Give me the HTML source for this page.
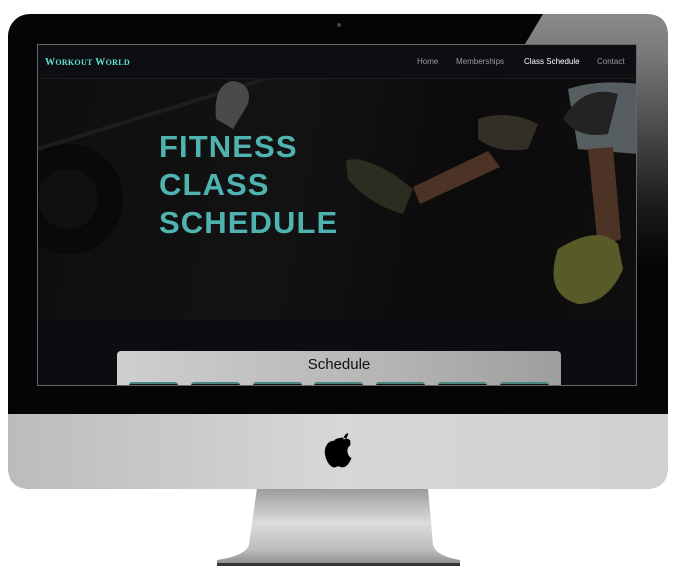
<!DOCTYPE html>
<html><head><style>
*{margin:0;padding:0;box-sizing:border-box}
body{width:698px;height:581px;background:#fff;position:relative;overflow:hidden;font-family:"Liberation Sans",sans-serif}
.abs{position:absolute}
</style></head><body>
<svg class="abs" style="left:0;top:0" width="698" height="581">
<defs>
<linearGradient id="st" x1="0" y1="0" x2="0" y2="1"><stop offset="0" stop-color="#9a9a9a"/><stop offset=".45" stop-color="#dcdcdc"/><stop offset=".8" stop-color="#bdbdbd"/><stop offset="1" stop-color="#8a8a8a"/></linearGradient>
<linearGradient id="chin" x1="0" y1="0" x2="1" y2="0"><stop offset="0" stop-color="#bcbcbc"/><stop offset=".5" stop-color="#d6d7d9"/><stop offset="1" stop-color="#cfd0d2"/></linearGradient>
<linearGradient id="gl" x1="0" y1="0" x2="0" y2="1"><stop offset="0" stop-color="#8a8a8a"/><stop offset=".1" stop-color="#7a7a7a"/><stop offset=".5" stop-color="#1a1a1a"/><stop offset=".65" stop-color="#050505"/></linearGradient>
</defs>
<path d="M257 488 L428 488 L433 545 Q436 556 460 560 L460 565 L217 565 L217 560 Q245 556 249 545 Z" fill="url(#st)"/>
<rect x="217" y="563" width="243" height="3" fill="#333"/>
<rect x="8" y="14" width="660" height="475" rx="22" fill="#050505"/>
<path d="M8 400 L668 400 L668 467 Q668 489 646 489 L30 489 Q8 489 8 467 Z" fill="url(#chin)"/>
<path d="M543 14 L646 14 Q668 14 668 36 L668 400 L525 400 L525 44 Z" fill="url(#gl)"/>
<rect x="8" y="386" width="660" height="28" fill="#050505"/>
<circle cx="339" cy="25" r="2" fill="#444"/>
<g transform="translate(340,450) scale(1.15) translate(-336,-452)">
<path d="M345 444 c-3 -4 -13 -3 -14 0 c-6 0 -9 6 -8 12 c1 6 5 12 9 11 c2 -1 3 -1 5 0 c4 1 7 -3 9 -8 c-4 -2 -5 -9 -1 -11 Z M339 443 c0 -3 2 -5 4 -6 c0 3 -1 5 -4 6 Z" fill="#000"/>
</g>
</svg>
<div class="abs" style="left:37px;top:44px;width:600px;height:342px;background:#0c0d10;border:1px solid #666;overflow:hidden">
 <div class="abs" style="left:0;top:0;width:600px;height:34px;background:#0d0e12;border-bottom:1px solid #1c1c1c">
  <div class="abs" style="left:7px;top:12px;color:#5fe3d3;font-weight:bold;font-size:10px;font-family:'Liberation Serif',serif;letter-spacing:.3px">W<span style="font-size:8px">ORKOUT</span> W<span style="font-size:8px">ORLD</span></div>
  <div class="abs" style="left:379px;top:12px;color:#9a9a9a;font-size:8px">Home</div>
  <div class="abs" style="left:418px;top:12px;color:#9a9a9a;font-size:8px">Memberships</div>
  <div class="abs" style="left:486px;top:12px;color:#fff;font-size:8px">Class Schedule</div>
  <div class="abs" style="left:559px;top:12px;color:#9a9a9a;font-size:8px">Contact</div>
 </div>
 <div class="abs" style="left:0;top:34px;width:600px;height:241px;background:linear-gradient(100deg,#151515,#1b1b1b 40%,#111 70%,#161616);overflow:hidden">
  <svg width="600" height="241" class="abs" style="left:0;top:0">
   <path d="M0 70 L260 -10" stroke="#2a2a2a" stroke-width="4"/>
   <circle cx="30" cy="120" r="55" fill="#0d0d0d"/><circle cx="30" cy="120" r="30" fill="#181818"/>
   <path d="M178 40 Q175 5 195 2 Q215 5 210 25 L195 50 Z" fill="#6a6a6a"/>
   <path d="M530 10 Q560 0 600 5 L600 75 L540 70 Z" fill="#7d878b"/>
   <path d="M525 40 Q545 5 580 15 L570 55 Q540 60 525 40Z" fill="#333"/>
   <path d="M440 40 Q470 30 500 45 L490 70 Q460 75 440 60Z" fill="#4a4438"/>
   <path d="M375 108 L450 72 L462 88 L382 125 Z" fill="#6e4a35"/>
   <path d="M550 70 L575 68 L583 160 L560 168 Z" fill="#6e4a35"/>
   <path d="M308 82 Q320 75 355 95 L375 110 L365 135 Q330 125 310 100 Z" fill="#3e4130"/>
   <path d="M520 170 Q560 145 580 165 L585 190 Q570 225 540 225 Q505 215 520 170 Z" fill="#7f8238"/>
  </svg>
  <div class="abs" style="left:0;top:0;width:600px;height:241px;background:rgba(0,0,0,.3)"></div>
  <div class="abs" style="left:121px;top:49px;color:#4fb3b0;font-weight:bold;font-size:31px;line-height:38px;letter-spacing:1.1px">FITNESS<br>CLASS<br>SCHEDULE</div>
 </div>
 <div class="abs" style="left:79px;top:306px;width:444px;height:40px;border-radius:4px;background:linear-gradient(90deg,#cfcfcf,#b5b5b5 60%,#9e9e9e)">
  <div style="text-align:center;font-size:15px;color:#111;padding-top:5px">Schedule</div>
  <div class="abs" style="left:12px;top:31px;width:420px;height:6px;display:flex;justify-content:space-between">
   <div style="width:49px;background:#0d1515;border-top:2px solid #4a8580;border-radius:3px 3px 0 0"></div><div style="width:49px;background:#0d1515;border-top:2px solid #4a8580;border-radius:3px 3px 0 0"></div><div style="width:49px;background:#0d1515;border-top:2px solid #4a8580;border-radius:3px 3px 0 0"></div><div style="width:49px;background:#0d1515;border-top:2px solid #4a8580;border-radius:3px 3px 0 0"></div><div style="width:49px;background:#0d1515;border-top:2px solid #4a8580;border-radius:3px 3px 0 0"></div><div style="width:49px;background:#0d1515;border-top:2px solid #4a8580;border-radius:3px 3px 0 0"></div><div style="width:49px;background:#0d1515;border-top:2px solid #4a8580;border-radius:3px 3px 0 0"></div>
  </div>
 </div>
</div>
</body></html>
